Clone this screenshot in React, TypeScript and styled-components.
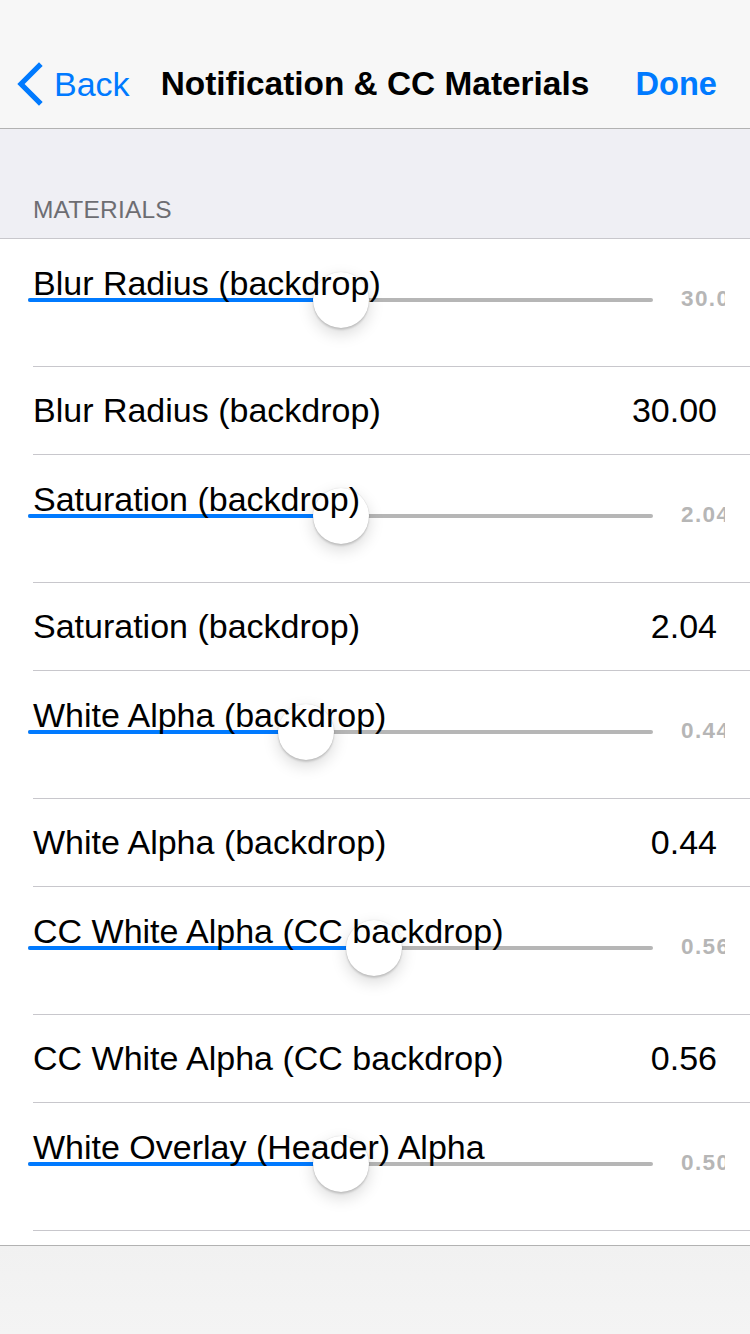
import React from "react";
import styled, { createGlobalStyle } from "styled-components";

const GlobalStyle = createGlobalStyle`
  html, body {
    margin: 0;
    padding: 0;
    background: #ffffff;
    font-family: "Liberation Sans", Arial, sans-serif;
    -webkit-font-smoothing: antialiased;
  }
  * { box-sizing: border-box; }
`;

const Page = styled.div`
  width: 750px;
  height: 1334px;
  display: flex;
  flex-direction: column;
  background: #ffffff;
  overflow: hidden;
`;

const NavBar = styled.header`
  height: 129px;
  padding-top: 40px;
  background: #f7f7f7;
  border-bottom: 1px solid #b2b2b2;
  display: grid;
  grid-template-columns: 1fr auto 1fr;
  align-items: center;
`;

const BackButton = styled.div`
  display: flex;
  align-items: center;
  gap: 11px;
  padding-left: 15px;
  color: #007aff;
  font-size: 34px;
  line-height: 40px;
`;

const Title = styled.h1`
  margin: 0;
  font-size: 33.4px;
  font-weight: 700;
  line-height: 40px;
  color: #000;
  white-space: nowrap;
`;

const DoneButton = styled.div`
  justify-self: end;
  padding-right: 33px;
  color: #007aff;
  font-size: 32.6px;
  font-weight: 700;
  line-height: 40px;
`;

const SectionHeader = styled.div`
  height: 109px;
  padding: 66px 33px 0;
  background: #efeff4;
  color: #6d6d72;
  font-size: 24.5px;
  line-height: 30px;
  letter-spacing: 0.2px;
`;

const List = styled.div`
  border-top: 1px solid #c8c7cc;
  background: #ffffff;
`;

const Separator = styled.div`
  height: 1px;
  margin-left: 33px;
  background: #c8c7cc;
`;

const SliderCell = styled.div`
  height: 127px;
  display: grid;
  grid-template-areas: "stack";
`;

const SliderLayer = styled.div`
  grid-area: stack;
  display: flex;
  align-items: flex-start;
`;

const CellLabel = styled.div`
  grid-area: stack;
  padding: 24px 0 0 33px;
  font-size: 34px;
  line-height: 40px;
  color: #000;
  white-space: nowrap;
  position: relative;
  z-index: 2;
  pointer-events: none;
`;

const Track = styled.div`
  position: relative;
  width: 625px;
  height: 4px;
  margin: 59px 0 0 28px;
  border-radius: 2px;
  background: #b6b6b6;
`;

const TrackFill = styled.div`
  height: 4px;
  border-radius: 2px;
  background: #007aff;
`;

const Thumb = styled.div`
  position: absolute;
  top: -26px;
  width: 56px;
  height: 56px;
  margin-left: -28px;
  border-radius: 50%;
  background: #ffffff;
  box-shadow: 0 6px 16px rgba(0, 0, 0, 0.15), 0 2px 2px rgba(0, 0, 0, 0.14),
    0 0 1px rgba(0, 0, 0, 0.2);
`;

const SliderValue = styled.div`
  width: 44px;
  margin: 49px 0 0 28px;
  overflow: hidden;
  white-space: nowrap;
  font-size: 22.5px;
  font-weight: 700;
  line-height: 22px;
  letter-spacing: 1.4px;
  color: #b6b6b6;
`;

const ValueCell = styled.div`
  height: 87px;
  display: flex;
  align-items: center;
  justify-content: space-between;
  padding: 0 33px;
  font-size: 34px;
  line-height: 87px;
  color: #000;
`;

const Filler = styled.div`
  flex: 1;
  background: #ffffff;
`;

const Toolbar = styled.footer`
  height: 89px;
  border-top: 1px solid #b2b2b2;
  background: linear-gradient(180deg, #f1f1f1 0%, #f4f4f4 100%);
`;

type Item = { label: string; value: string; thumb: number; valueRow: boolean };

const items: Item[] = [
  { label: "Blur Radius (backdrop)", value: "30.00", thumb: 313, valueRow: true },
  { label: "Saturation (backdrop)", value: "2.04", thumb: 313, valueRow: true },
  { label: "White Alpha (backdrop)", value: "0.44", thumb: 278, valueRow: true },
  { label: "CC White Alpha (CC backdrop)", value: "0.56", thumb: 346, valueRow: true },
  { label: "White Overlay (Header) Alpha", value: "0.50", thumb: 313, valueRow: false },
];

const Chevron = () => (
  <svg width="28" height="44" viewBox="0 0 28 44" aria-hidden>
    <polyline
      points="24,4 6,22 24,40"
      fill="none"
      stroke="#007aff"
      strokeWidth="5.2"
      strokeLinecap="square"
      strokeLinejoin="miter"
    />
  </svg>
);

const SliderRow = ({ item }: { item: Item }) => (
  <SliderCell>
    <SliderLayer>
      <Track>
        <TrackFill style={{ width: item.thumb }} />
        <Thumb style={{ left: item.thumb }} />
      </Track>
      <SliderValue>{item.value}</SliderValue>
    </SliderLayer>
    <CellLabel>{item.label}</CellLabel>
  </SliderCell>
);

export default function App() {
  return (
    <>
      <GlobalStyle />
      <Page>
        <NavBar>
          <BackButton>
            <Chevron />
            <span>Back</span>
          </BackButton>
          <Title>Notification &amp; CC Materials</Title>
          <DoneButton>Done</DoneButton>
        </NavBar>
        <SectionHeader>MATERIALS</SectionHeader>
        <List>
          {items.map((item) => (
            <React.Fragment key={item.label}>
              <SliderRow item={item} />
              <Separator />
              {item.valueRow && (
                <>
                  <ValueCell>
                    <span>{item.label}</span>
                    <span>{item.value}</span>
                  </ValueCell>
                  <Separator />
                </>
              )}
            </React.Fragment>
          ))}
        </List>
        <Filler />
        <Toolbar />
      </Page>
    </>
  );
}
